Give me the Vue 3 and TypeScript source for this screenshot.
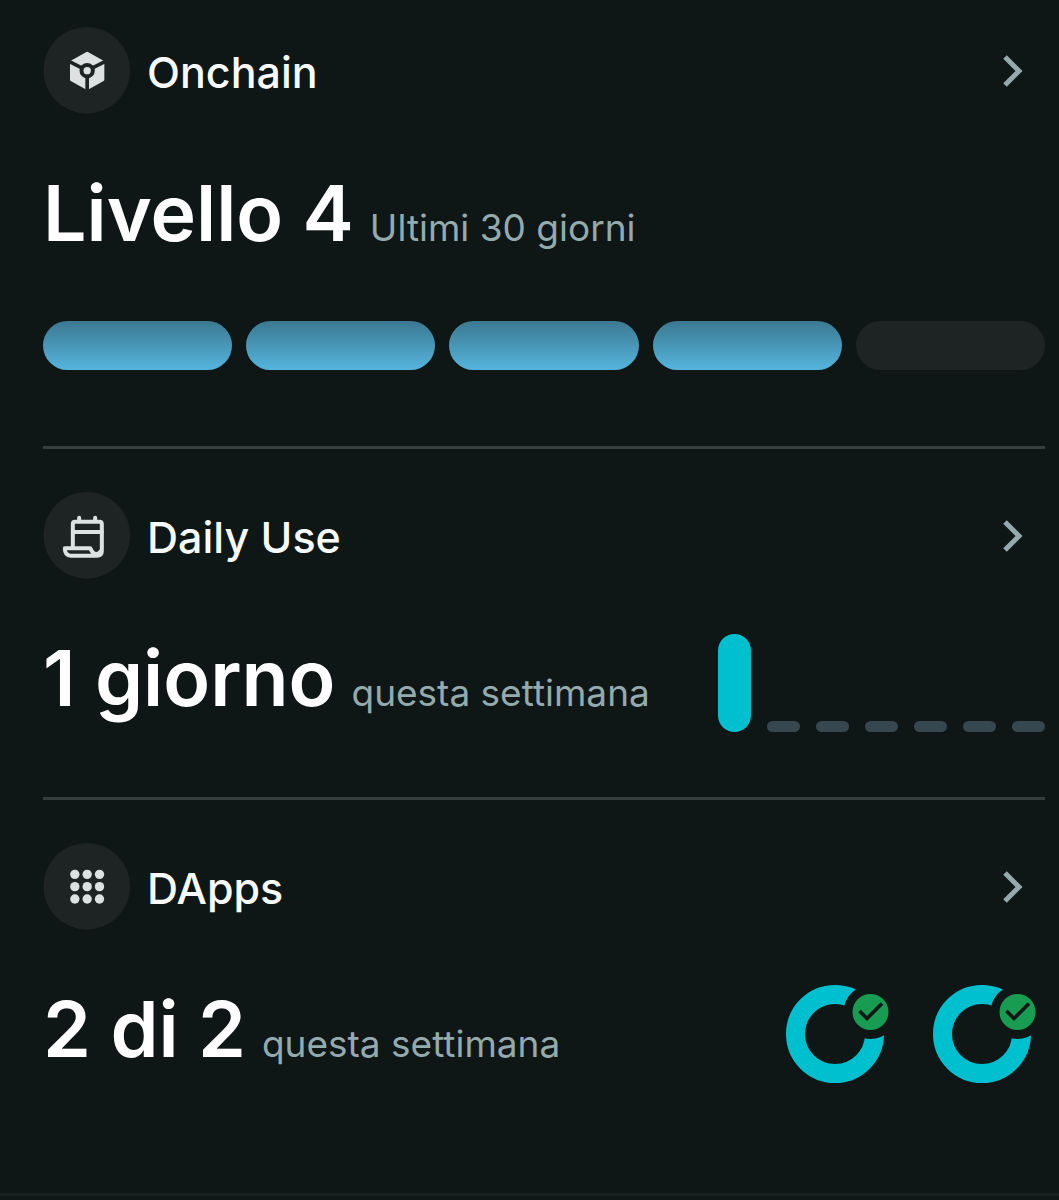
<script setup lang="ts">
type Card = {
  id: 'onchain' | 'daily' | 'dapps'
  title: string
  value: string
  note: string
}

const cards: Card[] = [
  { id: 'onchain', title: 'Onchain', value: 'Livello 4', note: 'Ultimi 30 giorni' },
  { id: 'daily', title: 'Daily Use', value: '1 giorno', note: 'questa settimana' },
  { id: 'dapps', title: 'DApps', value: '2 di 2', note: 'questa settimana' },
]

const level = 4
const days = [true, false, false, false, false, false, false]
const dots = [94, 131, 168]
</script>

<template>
  <main class="page">
    <section v-for="card in cards" :key="card.id" class="card" :class="card.id">
      <button class="head" type="button">
        <svg class="badge" viewBox="0 0 261 261" aria-hidden="true">
          <circle cx="130" cy="130" r="130" fill="#1e2424" />
          <g v-if="card.id === 'onchain'">
            <path d="M131 79 178 105V158L131 184 84 158V105Z" fill="#dde1e1" stroke="#dde1e1" stroke-width="9" stroke-linejoin="round" />
            <path d="M131 131 72 101M131 131 190 101M131 131V196" stroke="#1e2424" stroke-width="11" />
            <circle cx="131" cy="131" r="23" fill="#1e2424" />
            <circle cx="131" cy="131" r="11" fill="#dde1e1" />
          </g>
          <g v-else-if="card.id === 'daily'" fill="none" stroke="#dde1e1" stroke-width="12" stroke-linecap="round" stroke-linejoin="round">
            <path d="M88 168V96Q88 89 95 89H168Q175 89 175 96V176Q175 191 160 191H82Q64 191 64 169H140C143 169 142 183 156 186Q167 187 173 176" />
            <path d="M88 120H175M107 77V88M155 77V88" />
          </g>
          <g v-else fill="#dde1e1">
            <template v-for="y in dots" :key="y">
              <circle v-for="x in dots" :key="x" :cx="x" :cy="y" r="14" />
            </template>
          </g>
        </svg>
        <span class="title">{{ card.title }}</span>
        <svg class="chevron" viewBox="0 0 24 36" aria-hidden="true">
          <path d="M4 4 18 18 4 32" fill="none" stroke="#94aaac" stroke-width="5" />
        </svg>
      </button>

      <div class="row">
        <p class="text">
          <strong class="value">{{ card.value }}</strong>
          <span class="note">{{ card.note }}</span>
        </p>
        <div v-if="card.id === 'daily'" class="days">
          <span v-for="(used, i) in days" :key="i" class="day" :class="{ used }"></span>
        </div>
        <div v-if="card.id === 'dapps'" class="rings">
          <svg v-for="n in 2" :key="n" class="ring" viewBox="0 0 112 98" aria-hidden="true">
            <circle cx="49" cy="49" r="39.5" fill="none" stroke="#00c0d0" stroke-width="19" />
            <circle cx="84.5" cy="27" r="27" fill="#0e1616" />
            <circle cx="84.5" cy="27" r="18" fill="#179c52" />
            <path d="M73.5 26 81 33.5 96 18.500" fill="none" stroke="#0e1616" stroke-width="3.600" />
          </svg>
        </div>
      </div>

      <div v-if="card.id === 'onchain'" class="levels">
        <span v-for="n in 5" :key="n" class="level" :class="{ full: n <= level }"></span>
      </div>
    </section>
  </main>
</template>

<style>
body {
  margin: 0;
  background: #0e1616;
}
</style>

<style scoped>
.page {
  min-height: 100vh;
  box-sizing: border-box;
  background: #0e1616;
  color: #fff;
  font-family: Inter, "Liberation Sans", sans-serif;
}

.card {
  margin: 0 14px 0 43px;
  padding: 43px 0 65px;
  border-bottom: 3px solid #353d3d;
}

.card.onchain {
  padding: 27px 0 76px;
}

.card.dapps {
  margin: 0;
  padding: 43px 14px 110px 43px;
  border-bottom-color: #182020;
}

.head {
  display: flex;
  align-items: center;
  width: 100%;
  padding: 0 20px 0 0;
  border: 0;
  background: none;
  color: #f8fbfb;
  font: inherit;
  text-align: left;
  cursor: pointer;
}

.badge {
  flex: none;
  width: 88px;
  height: 87px;
}

.title {
  flex: 1;
  margin-left: 16px;
  padding-top: 2px;
  font-size: 43px;
  font-weight: 500;
  line-height: 48px;
}

.chevron {
  width: 24px;
  height: 36px;
}

.row {
  display: flex;
  align-items: flex-start;
  justify-content: space-between;
  height: 98px;
  margin-top: 55px;
}

.text {
  display: flex;
  align-items: baseline;
  gap: 16px;
  margin: 0;
  white-space: nowrap;
}

.value {
  font-size: 77px;
  font-weight: 600;
  line-height: 88px;
}

.note {
  color: #94aaac;
  font-size: 37px;
  line-height: 48px;
}

.days {
  display: flex;
  align-items: flex-end;
  gap: 16px;
  height: 98px;
}

.day {
  width: 33px;
  height: 11px;
  border-radius: 6px;
  background: #364750;
}

.day.used {
  height: 98px;
  border-radius: 17px;
  background: #00c0d0;
}

.rings {
  display: flex;
  gap: 35px;
}

.ring {
  width: 112px;
  height: 98px;
}

.levels {
  display: flex;
  gap: 14px;
  margin-top: 54px;
}

.level {
  flex: 1;
  height: 49px;
  border-radius: 25px;
  background: #1e2424;
}

.level.full {
  background: linear-gradient(#3c7890, #55b5de);
}
</style>
